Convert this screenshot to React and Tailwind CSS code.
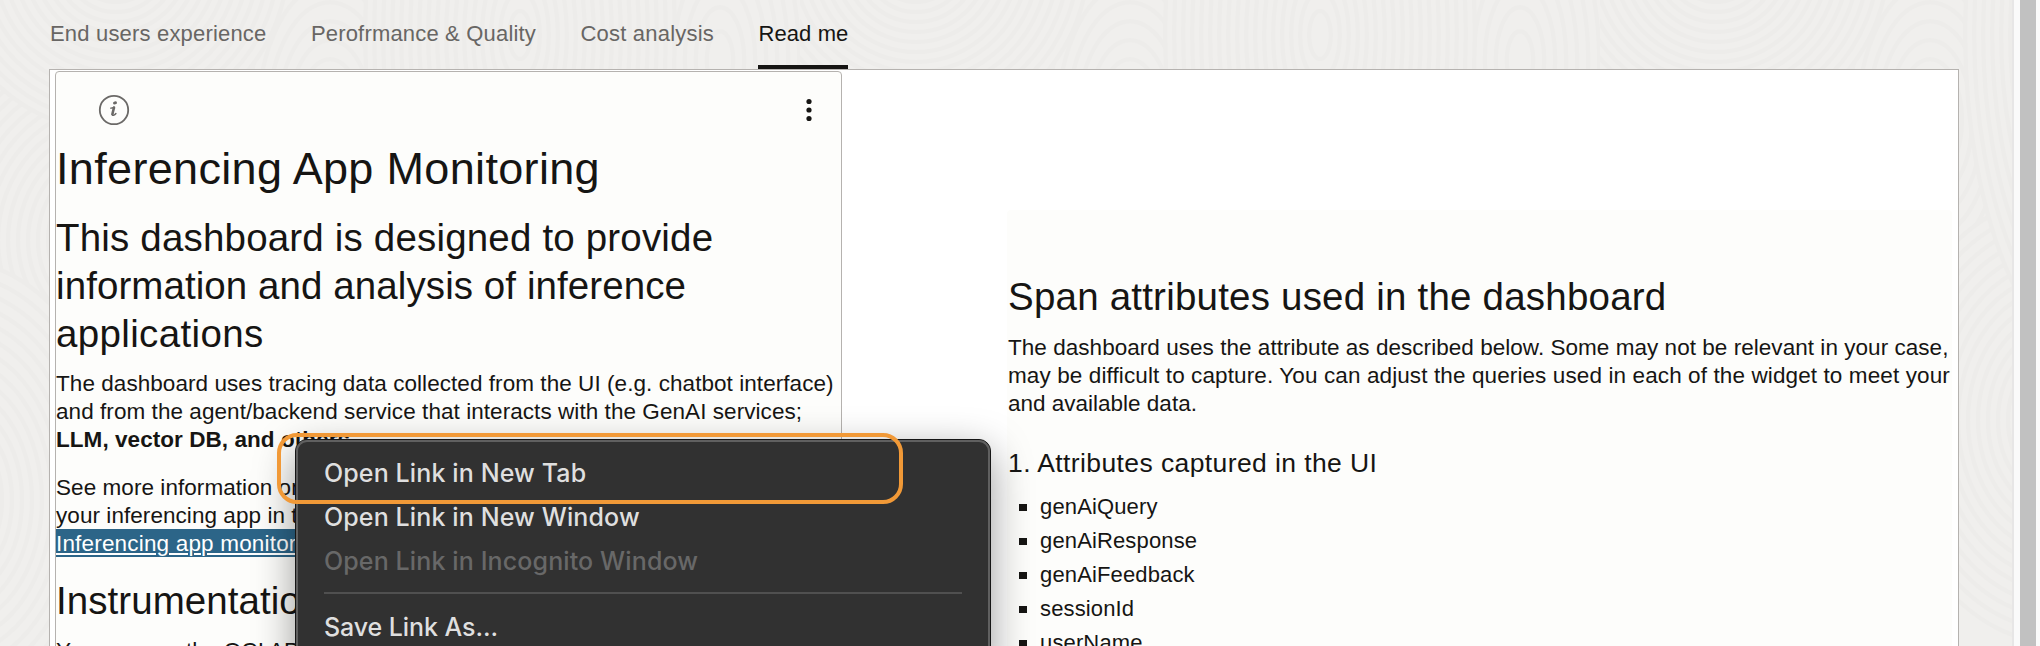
const rings = [];
for (let r = 172; r > 4; r -= 10) rings.push(r);

function Contours() {
  return (
    <svg className="absolute inset-0" width="2012" height="646" aria-hidden="true">
      <defs>
        <pattern id="contours" width="800" height="700" patternUnits="userSpaceOnUse">
          <rect width="800" height="700" fill="#f0efed" />
          <g fill="#f0efed" stroke="#edecea" strokeWidth="4">
            {rings.map((r) => <ellipse key={"a" + r} cx="720" cy="60" rx={r * 1.1} ry={r * 2.4} />)}
            {rings.map((r) => <ellipse key={"b" + r} cx="330" cy="120" rx={r} ry={r * 1.9} />)}
            {rings.map((r) => <ellipse key={"c" + r} cx="110" cy="240" rx={r} ry={r * 1.1} />)}
            {rings.map((r) => <ellipse key={"d" + r} cx="460" cy="420" rx={r} ry={r * 1.3} />)}
            {rings.map((r) => <ellipse key={"e" + r} cx="-50" cy="500" rx={r} ry={r * 1.4} />)}
            {rings.map((r) => <ellipse key={"f" + r} cx="520" cy="35" rx={r * 0.9} ry={r * 2} />)}
            {rings.map((r) => <circle key={"g" + r} cx="116" cy="-40" r={r} />)}
          </g>
        </pattern>
      </defs>
      <rect width="2012" height="646" fill="url(#contours)" />
    </svg>
  );
}

const tabs = [
  { label: "End users experience", track: "tracking-[0.18px]" },
  { label: "Perofrmance & Quality", track: "tracking-[0.18px]" },
  { label: "Cost analysis", track: "tracking-[0.2px]" },
  { label: "Read me", track: "tracking-[0.1px]", active: true },
];

function Tabs() {
  return (
    <nav className="flex h-[69px] gap-[44.5px] pl-[50px] text-[22px] leading-7">
      {tabs.map((t) => (
        <div
          key={t.label}
          className={
            "flex flex-col justify-between whitespace-nowrap pt-5 " +
            t.track +
            (t.active ? " text-[#161513]" : " text-[#686664]")
          }
        >
          <span>{t.label}</span>
          {t.active && <span className="h-1 bg-[#161513]" />}
        </div>
      ))}
    </nav>
  );
}

function ReadmeCard() {
  return (
    <section className="h-[640px] w-[787px] shrink-0 rounded-t-[4px] border border-[#b5b2af] bg-[#fdfdfb]">
      <div className="flex h-[71px] items-start justify-between pl-[42px] pr-[28px] pt-[22px]">
        <svg width="32" height="32" viewBox="0 0 32 32">
          <circle cx="16" cy="16" r="14.2" fill="none" stroke="#6b6967" strokeWidth="1.8" />
          <ellipse cx="17" cy="8.900" rx="2" ry="1.500" fill="#6b6967" transform="rotate(-15 17 8.9)" />
          <path
            d="M12.700 14.200c1.100-.1 2.200-.4 3.200-.9"
            fill="none"
            stroke="#6b6967"
            strokeWidth="1.300"
            strokeLinecap="round"
          />
          <path
            d="M16 13.600c-.4 1.700-1.200 4.400-1.500 6.300"
            fill="none"
            stroke="#6b6967"
            strokeWidth="2.600"
            strokeLinecap="round"
          />
          <path
            d="M14 20.400c.3 1.700 2.600 1 3.900-.9"
            fill="none"
            stroke="#6b6967"
            strokeWidth="1.500"
            strokeLinecap="round"
          />
        </svg>
        <svg width="8" height="32" viewBox="0 0 8 32" fill="#161513">
          <circle cx="4" cy="7.500" r="2.600" />
          <circle cx="4" cy="16" r="2.600" />
          <circle cx="4" cy="24.500" r="2.600" />
        </svg>
      </div>
      <div className="whitespace-nowrap text-[22.5px] leading-7 tracking-[0.06px]">
        <h1 className="text-[45px] leading-[52px] tracking-[0.33px]">Inferencing App Monitoring</h1>
        <h2 className="mt-[19px] text-[38.5px] leading-[48px] tracking-[0.18px]">
          This dashboard is designed to provide
          <br />
          <span className="tracking-[0.08px]">information and analysis of inference</span>
          <br />
          <span className="tracking-[0.35px]">applications</span>
        </h2>
        <p className="mt-3">
          The dashboard uses tracing data collected from the UI (e.g. chatbot interface)
          <br />
          and from the agent/backend service that interacts with the GenAI services;
          <br />
          <b>LLM, vector DB, and others.</b>
        </p>
        <p className="mt-5">
          See more information on
          <br />
          your inferencing app in the
          <br />
          <a className="-mt-px inline-block h-7 bg-[#2c6588] align-top leading-[30px] tracking-[0.18px] text-white underline decoration-2 underline-offset-[2px]">
            Inferencing app monitoring
          </a>
        </p>
        <h2 className="mt-[19px] text-[38.5px] leading-[48px]">Instrumentation</h2>
        <p className="mt-3">You can use the OCI APM</p>
      </div>
    </section>
  );
}

const attributes = ["genAiQuery", "genAiResponse", "genAiFeedback", "sessionId", "userName"];

function AttributesCard() {
  return (
    <section className="mt-[139px] h-[500px] w-[945px] shrink-0 rounded-t-[4px] bg-[#fdfdfb] pl-px pt-[63px] whitespace-nowrap">
      <h2 className="text-[38.5px] leading-[48px] tracking-[0.21px]">Span attributes used in the dashboard</h2>
      <p className="mt-[13px] text-[22.5px] leading-7">
        <span className="tracking-[0.04px]">
          The dashboard uses the attribute as described below. Some may not be relevant in your case,
        </span>
        <br />
        <span className="tracking-[0.11px]">
          may be difficult to capture. You can adjust the queries used in each of the widget to meet your
        </span>
        <br />
        and available data.
      </p>
      <h3 className="mt-[28px] text-[26.5px] leading-[34px] tracking-[0.4px]">1. Attributes captured in the UI</h3>
      <ul className="mt-[10px] pl-[11px] text-[22px] leading-[34px] tracking-[0.14px]">
        {attributes.map((a) => (
          <li key={a} className="flex items-center gap-[13px]">
            <span className="h-[7px] w-[8px] bg-[#161513]" />
            {a}
          </li>
        ))}
      </ul>
    </section>
  );
}

function ContextMenu() {
  return (
    <div className="absolute left-[295px] top-[439px] h-[240px] w-[696px] rounded-[12px] border border-[#161616] bg-[#313131] shadow-[0_12px_40px_rgba(0,0,0,0.4)]">
      <div className="h-full rounded-[11px] border-2 border-[#606060] pl-[26px] pr-[26px] pt-[9px] font-[Inter] text-[25px] font-medium leading-[44px] tracking-[0.12px] text-[#dfdfdf]">
        <div>Open Link in New Tab</div>
        <div>Open Link in New Window</div>
        <div className="text-[#686868]">Open Link in Incognito Window</div>
        <div className="mb-[11px] mt-[9px] h-[2px] bg-[#505050]" />
        <div className="tracking-[-0.08px]">Save Link As...</div>
      </div>
    </div>
  );
}

export default function App() {
  return (
    <div className="relative flex h-[646px] w-[2040px] overflow-hidden bg-[#f0efed] font-['Liberation_Sans',sans-serif] text-[#161513]">
      <Contours />
      <main className="relative w-[2012px] shrink-0">
        <Tabs />
        <div className="ml-[49px] flex h-[640px] w-[1910px] gap-[165px] border border-[#b5b2af] bg-white pl-[5px] pt-px">
          <ReadmeCard />
          <AttributesCard />
        </div>
      </main>
      <div className="relative flex w-7 shrink-0 border-l-2 border-[#e7e6e6] bg-[#fafafa] pl-[6px]">
        <div className="w-4 bg-[#c1c1c1]" />
      </div>
      <ContextMenu />
      <div className="absolute left-[277px] top-[433px] h-[71px] w-[626px] rounded-[20px] border-4 border-[#f19937]" />
    </div>
  );
}
